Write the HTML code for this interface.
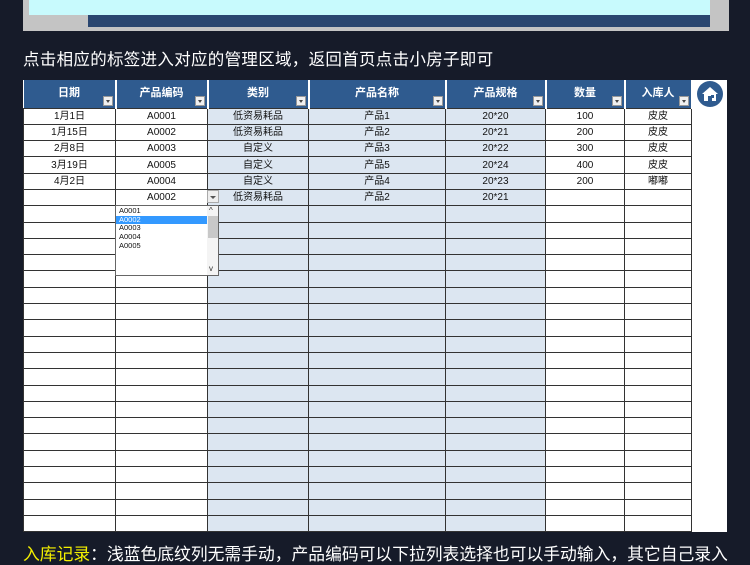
<!DOCTYPE html>
<html><head><meta charset="utf-8">
<style>
*{margin:0;padding:0;box-sizing:border-box}
body{width:750px;height:563px;overflow:hidden;background:#161b29;font-family:"Liberation Sans","Noto Sans CJK SC",sans-serif;position:relative}
.abs{position:absolute}
table{position:absolute;left:23px;top:80px;border-collapse:collapse;table-layout:fixed;background:#fff}
td{border:1px solid #333;height:16.3px;font-size:10px;text-align:center;color:#111;padding:0;line-height:15px;white-space:nowrap;overflow:hidden;vertical-align:middle}
tr.h td{height:28px;background:#2f5b8f;color:#fff;font-weight:bold;font-size:11px;position:relative;border-color:#fff;border-width:0 2px 0 0}
.f{position:absolute;right:2px;bottom:2px;width:10px;height:10px;background:#f0f0f0;border:1px solid #999}
.f:after{content:"";position:absolute;left:2px;top:3px;border:2.5px solid transparent;border-top:3px solid #444}
td.b{background:#dce6f1}
td.l{border:none;border-left:1px solid #333;background:#fff}
</style></head><body>
<div class="abs" style="left:23px;top:0;width:706px;height:31px;background:#c4c4c4"></div>
<div class="abs" style="left:29px;top:0;width:681px;height:15px;background:#c8fafd"></div>
<div class="abs" style="left:88px;top:15px;width:622px;height:12px;background:#2a4670"></div>
<div class="abs" style="left:23px;top:46px;color:#fff;font-size:16.5px;letter-spacing:0.3px">点击相应的标签进入对应的管理区域，返回首页点击小房子即可</div>
<table id="t">
<colgroup><col style="width:92px"><col style="width:92px"><col style="width:101px"><col style="width:137px"><col style="width:100px"><col style="width:79px"><col style="width:67px"><col style="width:35px"></colgroup>
<tr class="h"><td>日期<span class="f"></span></td><td>产品编码<span class="f"></span></td><td>类别<span class="f"></span></td><td>产品名称<span class="f"></span></td><td>产品规格<span class="f"></span></td><td>数量<span class="f"></span></td><td>入库人<span class="f"></span></td><td style="background:#fff;border:none"><svg width="28" height="28" viewBox="0 0 28 28" style="display:block;margin:0 auto"><circle cx="14" cy="14" r="13" fill="#2f5b8f"/><path d="M6 14 L14 7 L22 14 L20 14 L20 21 L16 21 L16 16 L12 16 L12 21 L8 21 L8 14Z" fill="#fff"/><rect x="15" y="15" width="3" height="3" fill="#2f5b8f"/></svg></td></tr>
<tr><td>1月1日</td><td>A0001</td><td class="b">低资易耗品</td><td class="b">产品1</td><td class="b">20*20</td><td>100</td><td>皮皮</td><td class="l" rowspan="26"></td></tr>
<tr><td>1月15日</td><td>A0002</td><td class="b">低资易耗品</td><td class="b">产品2</td><td class="b">20*21</td><td>200</td><td>皮皮</td></tr>
<tr><td>2月8日</td><td>A0003</td><td class="b">自定义</td><td class="b">产品3</td><td class="b">20*22</td><td>300</td><td>皮皮</td></tr>
<tr><td>3月19日</td><td>A0005</td><td class="b">自定义</td><td class="b">产品5</td><td class="b">20*24</td><td>400</td><td>皮皮</td></tr>
<tr><td>4月2日</td><td>A0004</td><td class="b">自定义</td><td class="b">产品4</td><td class="b">20*23</td><td>200</td><td>嘟嘟</td></tr>
<tr><td></td><td>A0002</td><td class="b">低资易耗品</td><td class="b">产品2</td><td class="b">20*21</td><td></td><td></td></tr>
<script>for(var i=0;i<20;i++)document.write('<tr><td></td><td></td><td class="b"></td><td class="b"></td><td class="b"></td><td></td><td></td></tr>');</script>
</table>
<div class="abs" style="left:207px;top:190px;width:12px;height:13px;background:#eee;border:1px solid #aaa"></div>
<div class="abs" style="left:210px;top:196px;border:3px solid transparent;border-top:3px solid #555"></div>
<div class="abs" style="left:115px;top:205px;width:104px;height:71px;background:#fff;border:1px solid #666;font-size:7.5px;line-height:8.7px;color:#111;padding:1px 0 0 3px">A0001<br><span style="display:block;margin-left:-3px;padding-left:3px;width:92px;background:#3399ff;color:#fff">A0002</span>A0003<br>A0004<br>A0005</div>
<div class="abs" style="left:207px;top:206px;width:11px;height:69px;background:#f4f4f4"></div>
<div class="abs" style="left:208px;top:216px;width:10px;height:22px;background:#c8c8c8"></div>
<div class="abs" style="left:209px;top:206px;font-size:8px;color:#333">^</div>
<div class="abs" style="left:209px;top:264px;font-size:8px;color:#333">v</div>
<div class="abs" style="left:23px;top:541px;color:#fff;font-size:16.8px;white-space:nowrap;letter-spacing:0px"><span style="color:#f4f000">入库记录</span>：浅蓝色底纹列无需手动，产品编码可以下拉列表选择也可以手动输入，其它自己录入</div>
</body></html>
